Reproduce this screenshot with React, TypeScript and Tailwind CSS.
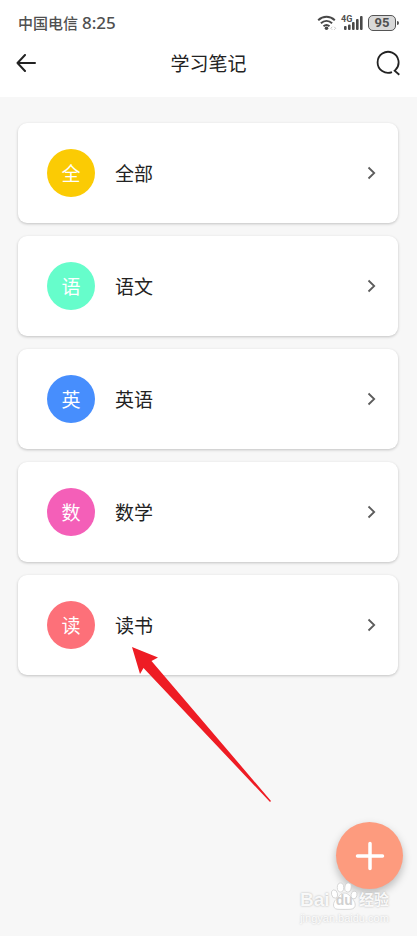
import React from "react";

type Note = { badge: string; label: string; color: string };

const notes: Note[] = [
  { badge: "全", label: "全部", color: "bg-[#fbcb04]" },
  { badge: "语", label: "语文", color: "bg-[#66fdcb]" },
  { badge: "英", label: "英语", color: "bg-[#478efd]" },
  { badge: "数", label: "数学", color: "bg-[#f45fb8]" },
  { badge: "读", label: "读书", color: "bg-[#fd7079]" },
];

function StatusBar() {
  return (
    <div className="flex h-[46px] items-center justify-between px-[18px] text-[#505050]">
      <div className="flex items-center gap-1">
        <span className="text-[15px] leading-5 font-medium">中国电信</span>
        <span className="font-['Noto_Sans',sans-serif] text-[17px] leading-5 font-medium">8:25</span>
      </div>
      <div className="flex items-center">
        <svg width="20" height="16" viewBox="0 0 20 16" fill="none" stroke="#484848" strokeWidth="2" aria-label="Wi-Fi">
          <path d="M1.2 5.2C6 .7 13 .7 17.8 5.2M3.9 8.3C7.2 5.3 11.8 5.3 15.1 8.3M6.5 11.2C8.400 9.600 10.600 9.600 12.500 11.200" />
          <circle cx="9.5" cy="13.3" r="1.8" fill="#484848" stroke="none" />
          <path d="m15.300 11.800-1.500 1.500 1.500 1.500m1.900-3 1.500 1.500-1.500 1.500" stroke="#c8c8c8" strokeWidth="1" />
        </svg>
        <div className="relative ml-1 h-4 w-[22px]">
          <span className="absolute top-0 left-0 font-['Roboto',sans-serif] text-[9px] leading-[8px] font-bold">4G</span>
          <svg className="absolute inset-0" width="22" height="16" viewBox="0 0 22 16" fill="#484848" aria-label="信号">
            <rect x="3" y="11" width="2.6" height="4" rx="1" />
            <rect x="7" y="9.5" width="2.6" height="5.5" rx="1" />
            <rect x="11" y="7" width="2.6" height="8" rx="1" />
            <rect x="15" y="4" width="2.6" height="11" rx="1" />
            <rect x="19" y="1" width="2.6" height="14" rx="1" />
          </svg>
        </div>
        <div className="ml-[5px] flex h-4 w-7 items-center justify-center rounded-[5px] border border-[#555] bg-[#d9d9d9] font-['Roboto',sans-serif] text-[13px] leading-4 font-bold">
          95
        </div>
        <div className="ml-px h-1 w-[2px] rounded-r-sm bg-[#555]" />
      </div>
    </div>
  );
}

function NoteCard({ note }: { note: Note }) {
  return (
    <li>
      <button
        type="button"
        className="flex h-[100px] w-full items-center rounded-[9px] bg-white pr-[22px] pl-[29px] text-left shadow-[0_1px_3px_rgba(0,0,0,0.22)]"
      >
        <span className={`flex size-12 items-center justify-center rounded-full text-[19px] leading-6 text-white ${note.color}`}>
          {note.badge}
        </span>
        <span className="ml-5 flex-1 text-[19px] leading-6 text-[#222]">{note.label}</span>
        <svg width="9" height="14" viewBox="0 0 9 14" fill="none" stroke="#5c5c5c" strokeWidth="1.8" aria-hidden="true">
          <path d="M1.5 1.5 7.2 7 1.5 12.5" />
        </svg>
      </button>
    </li>
  );
}

function Watermark() {
  return (
    <div className="pointer-events-none absolute right-[28px] bottom-[10px] w-[89px] text-white/90" aria-hidden="true">
      <div className="flex h-[28px] items-end justify-between font-['Liberation_Sans','Noto_Sans_CJK_SC',sans-serif] leading-5 font-bold [text-shadow:0_0_2px_#aaa]">
        <span className="text-[19px]">Bai</span>
        <span className="relative flex size-7 items-end justify-center">
          <svg className="absolute inset-0" width="28" height="28" viewBox="0 0 28 28" fill="#fff" stroke="#cfcfcf" strokeWidth=".8">
            <ellipse cx="4.500" cy="12" rx="3" ry="4.200" transform="rotate(-15 4.500 12)" />
            <ellipse cx="10.500" cy="5.500" rx="3.200" ry="4.500" />
            <ellipse cx="18" cy="5.500" rx="3.200" ry="4.500" transform="rotate(8 18 5.500)" />
            <ellipse cx="24" cy="13" rx="3" ry="4" transform="rotate(15 24 13)" />
            <path d="M14 11C10 11 9 15 6 17.500S2 26.500 7 27.200c3 .3 11 .3 14 0 5.500-.7 5-6.200 2-9.700S18 11 14 11Z" />
          </svg>
          <span className="relative text-[14px] text-[#d0d0d0] [text-shadow:none]">du</span>
        </span>
        <span className="text-[15px]">经验</span>
      </div>
      <div className="text-center font-['Liberation_Sans',sans-serif] text-[11px] leading-4 [text-shadow:0_0_2px_#bbb]">jingyan.baidu.com</div>
    </div>
  );
}

export default function App() {
  return (
    <div className="relative flex min-h-screen flex-col overflow-hidden bg-[#f7f7f7] font-['Noto_Sans_CJK_SC',sans-serif]">
      <header className="bg-white pb-[17px]">
        <StatusBar />
        <div className="flex h-[34px] items-center justify-between px-4">
          <button type="button" aria-label="返回" className="flex w-7 items-center">
            <svg width="20" height="18" viewBox="0 0 20 18" fill="none" stroke="#222" strokeWidth="2" strokeLinecap="round" strokeLinejoin="round">
              <path d="M9 1 1.5 9 9 17M1.5 9H19" />
            </svg>
          </button>
          <h1 className="text-[19px] leading-6 text-[#222]">学习笔记</h1>
          <button type="button" aria-label="搜索" className="flex w-7 items-center justify-end">
            <svg width="26" height="26" viewBox="0 0 26 26" fill="none" stroke="#222" strokeWidth="1.8">
              <path d="M17 22.1A10.5 10.5 0 1 1 20.5 19.8L19.6 20.7 24.3 24.8" />
            </svg>
          </button>
        </div>
      </header>

      <main className="pt-[26px] pr-[19px] pl-[18px]">
        <ul className="flex flex-col gap-[13px]">
          {notes.map((note) => (
            <NoteCard key={note.label} note={note} />
          ))}
        </ul>
      </main>

      <svg className="pointer-events-none absolute top-[647px] left-[132px]" width="140" height="156" viewBox="0 0 140 156" fill="#ee1c24" aria-hidden="true">
        <path d="M0 0 26 10.5 19.5 14 139 154 138 155 11.5 21 8 27Z" />
      </svg>

      <button
        type="button"
        aria-label="新建"
        className="absolute right-[14px] bottom-[47px] flex size-[67px] items-center justify-center rounded-full bg-[#fd9b7e] shadow-[0_4px_8px_rgba(0,0,0,0.25)]"
      >
        <svg width="30" height="30" viewBox="0 0 30 30" stroke="#fff" strokeWidth="3.5" strokeLinecap="round">
          <path d="M15 2.5V27.5M2.5 15H27.5" />
        </svg>
      </button>
      <Watermark />
    </div>
  );
}
